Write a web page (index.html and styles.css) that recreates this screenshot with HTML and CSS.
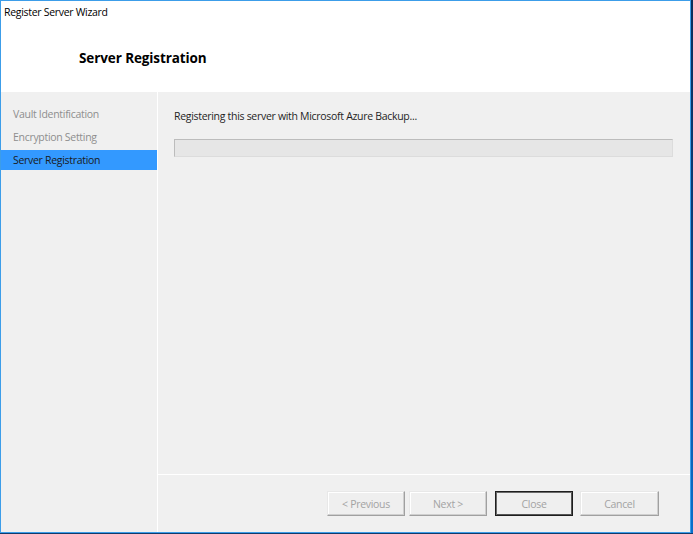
FILE: index.html
```html
<!DOCTYPE html>
<html>
<head>
<meta charset="utf-8">
<link rel="stylesheet" href="styles.css">
</head>
<body>
<div class="desk">
  <div class="window">
    <div class="top">
      <div class="title">Register Server Wizard</div>
      <div class="heading">Server Registration</div>
    </div>
    <div class="body">
      <nav class="side">
        <div class="item">Vault Identification</div>
        <div class="item">Encryption Setting</div>
        <div class="item active">Server Registration</div>
      </nav>
      <div class="main">
        <div class="content">
          <div class="msg">Registering this server with Microsoft Azure Backup...</div>
          <div class="progress"></div>
        </div>
        <div class="footer">
          <button class="btn">&lt; Previous</button>
          <button class="btn next">Next &gt;</button>
          <button class="btn default">Close</button>
          <button class="btn cancel">Cancel</button>
        </div>
      </div>
    </div>
  </div>
  <div class="edge"></div>
</div>
</body>
</html>
```

FILE: styles.css
```css
* { box-sizing: border-box; }
html, body {
  margin: 0;
  padding: 0;
  width: 693px;
  height: 534px;
  overflow: hidden;
  background: #0e3b6c;
  font-family: "Open Sans", "Noto Sans", sans-serif;
  font-size: 10.5px;
  letter-spacing: -0.3px;
  color: #000;
}
.desk {
  display: flex;
  height: 534px;
}
.window {
  width: 691px;
  height: 533px;
  border: 1px solid #3c9de9;
  background: #f0f0f0;
  display: flex;
  flex-direction: column;
}
.edge {
  width: 2px;
  height: 533px;
  background: linear-gradient(#0a2f5c, #0a3c78 40%, #0c58a8 70%, #0a70cc);
}
.top {
  height: 91px;
  background: #fff;
}
.title {
  padding: 3px 0 0 3px;
  line-height: 16px;
  height: 19px;
}
.heading {
  padding: 28px 0 0 78px;
  font-size: 13.5px;
  font-weight: 700;
  letter-spacing: -0.1px;
  line-height: 20px;
}
.body {
  flex: 1;
  display: flex;
}
.side {
  width: 157px;
  padding-top: 12px;
  display: flex;
  flex-direction: column;
  gap: 3px;
  border-right: 1px solid #fff;
}
.item {
  height: 20px;
  line-height: 20px;
  padding-left: 12px;
  color: #8e8e8e;
}
.item.active {
  background: #3399ff;
  color: #1a1a1a;
}
.main {
  flex: 1;
  display: flex;
  flex-direction: column;
}
.content {
  flex: 1;
  padding: 15px 17px 0 16px;
  border-bottom: 1px solid #fff;
}
.msg {
  line-height: 18px;
  height: 18px;
  color: #1e1e1e;
}
.progress {
  margin-top: 14px;
  height: 18px;
  background: #e6e6e6;
  border: 1px solid #bcbcbc;
  border-bottom-color: #dcdcdc;
  border-right-color: #dcdcdc;
}
.footer {
  height: 57px;
  display: flex;
  justify-content: flex-end;
  align-items: flex-start;
  padding: 16px 31px 0 0;
}
.btn {
  width: 78px;
  height: 25px;
  font-family: inherit;
  font-size: 10.5px;
  letter-spacing: -0.3px;
  color: #a3a3a3;
  background: #efefef;
  border: 1px solid;
  border-color: #e8e8e8 #a0a0a0 #a0a0a0 #e8e8e8;
  box-shadow: inset -1px -1px 0 #cfcfcf, inset 1px 1px 0 #ffffff;
  padding: 0;
}
.next { margin-left: 4px; }
.default {
  margin-left: 8px;
  border: 1px solid #1e1e1e;
  box-shadow: inset 1px 1px 0 #6a6a6a, inset -1px -1px 0 #555;
}
.cancel { margin-left: 7px; width: 79px; }
```
